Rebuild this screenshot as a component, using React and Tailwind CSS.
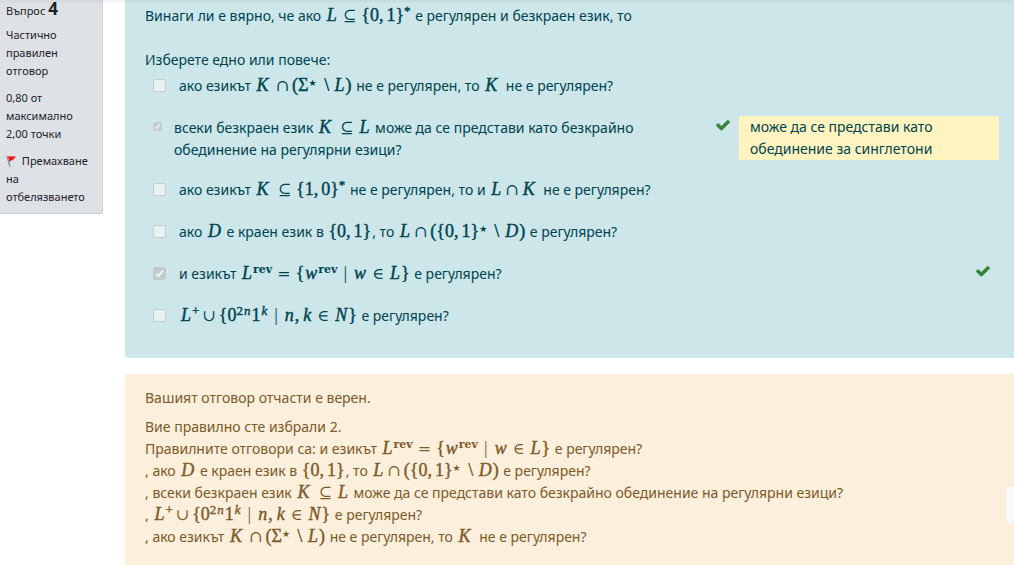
import React from 'react';

/* ---------- inline maths ---------- */

const M = ({ children }) => (
  <span className="mx-px whitespace-nowrap font-['Liberation_Serif','DejaVu_Serif',serif] text-[18px] leading-none [-webkit-text-stroke:0.4px]">
    {children}
  </span>
);
const V = ({ children }) => <i className="mx-px">{children}</i>;
const K = () => <i className="mr-1 ml-px">K</i>;
const Rel = ({ children }) => (
  <span className="mx-[5px] font-['DejaVu_Serif',serif] text-[16px] leading-none [-webkit-text-stroke:0]">{children}</span>
);
const Bin = ({ children }) => (
  <span className="mx-[3px] font-['DejaVu_Serif',serif] text-[16px] leading-none [-webkit-text-stroke:0]">{children}</span>
);
const Bar = () => <span className="mx-1.5 [-webkit-text-stroke:0]">|</span>;
const Comma = () => <span className="mr-[3px]">,</span>;
const Sup = ({ children }) => (
  <span className="relative -top-1.5 text-[13px] leading-none">{children}</span>
);
const Star = () => (
  <span className="relative -top-[5px] mr-px font-['DejaVu_Sans',sans-serif] text-[9px] leading-none [-webkit-text-stroke:0]">★</span>
);
const Rev = () => (
  <span className="relative -top-1.5 font-['DejaVu_Serif',serif] text-[11px] leading-none font-bold [-webkit-text-stroke:0]">rev</span>
);

const Bits = ({ a = 0, b = 1 }) => (
  <>
    {'{'}{a}<Comma />{b}{'}'}
  </>
);

const Complement = () => (
  <>
    ако езикът <M><K /><Bin>∩</Bin>(Σ<Star /><Bin>∖</Bin><V>L</V>)</M> не е регулярен, то <M><K /></M> не е регулярен?
  </>
);
const InfiniteUnion = () => (
  <>
    всеки безкраен език <M><K /><Rel>⊆</Rel><V>L</V></M> може да се представи като безкрайно обединение на регулярни езици?
  </>
);
const Intersection = () => (
  <>
    ако езикът <M><K /><Rel>⊆</Rel><Bits a={1} b={0} /><Sup>*</Sup></M> не е регулярен, то и <M><V>L</V><Bin>∩</Bin><K /></M> не е регулярен?
  </>
);
const FiniteLanguage = () => (
  <>
    ако <M><V>D</V></M> е краен език в <M><Bits /></M>, то <M><V>L</V><Bin>∩</Bin>(<Bits /><Star /><Bin>∖</Bin><V>D</V>)</M> е регулярен?
  </>
);
const Reverse = () => (
  <>
    и езикът <M><V>L</V><Rev /><Rel>=</Rel>{'{'}<V>w</V><Rev /><Bar /><V>w</V><Rel>∈</Rel><V>L</V>{'}'}</M> е регулярен?
  </>
);
const Powers = () => (
  <>
    <M><V>L</V><Sup>+</Sup><Bin>∪</Bin>{'{'}0<Sup>2<V>n</V></Sup>1<Sup><V>k</V></Sup><Bar /><V>n</V><Comma /><V>k</V><Rel>∈</Rel><V>N</V>{'}'}</M> е регулярен?
  </>
);

/* ---------- icons ---------- */

const Check = () => (
  <svg viewBox="0 0 1792 1792" className="mr-2 size-4 shrink-0 fill-[#398439]" role="img" aria-label="Правилно">
    <path d="M1671 566q0 40-28 68l-724 724-136 136q-28 28-68 28t-68-28l-136-136-362-362q-28-28-28-68t28-68l136-136q28-28 68-28t68 28l294 295 656-657q28-28 68-28t68 28l136 136q28 28 28 68z" />
  </svg>
);

const Flag = () => (
  <svg viewBox="0 0 12 12" className="mr-px inline-block size-3 align-[-2px]" aria-hidden="true">
    <path d="M1 1 4 11.5" stroke="#8b8b8b" strokeWidth="1.3" fill="none" />
    <path d="M2 1.2 10 1.4 7.4 4.4 3.4 6.4z" fill="#ee1515" />
  </svg>
);

/* ---------- answers ---------- */

const answers = [
  { id: 'a0', Body: Complement },
  { id: 'a1', Body: InfiniteUnion, checked: true, correct: true, small: true, feedback: 'може да се представи като обединение за синглетони' },
  { id: 'a2', Body: Intersection },
  { id: 'a3', Body: FiniteLanguage },
  { id: 'a4', Body: Reverse, checked: true, correct: true },
  { id: 'a5', Body: Powers },
];

function Answer({ id, Body, checked, correct, small, feedback }) {
  return (
    <div className={`flex items-start pl-2 ${feedback ? 'pb-[18px]' : 'pb-5'}`}>
      <span className={`relative flex shrink-0 ${small ? 'mr-3 mt-[5px] size-[9px]' : 'mr-[13px] mt-1 size-[13px]'}`}>
        <input
          id={id}
          type="checkbox"
          disabled
          defaultChecked={checked}
          className="size-full appearance-none rounded-[2px] border border-[#c6cdcf] bg-[#e8f0f2] checked:border-[#c5cbcc] checked:bg-[#c5cbcc]"
        />
        {checked && (
          <svg viewBox="0 0 13 13" className="pointer-events-none absolute inset-0 size-full" aria-hidden="true">
            <path d="M3 6.8 5.4 9.2 10 3.6" stroke="#f4f7f8" strokeWidth="1.8" fill="none" />
          </svg>
        )}
      </span>
      <label htmlFor={id} className="min-w-0 flex-1 pr-3"><Body /></label>
      {correct && <Check />}
      {feedback && <div className="-mt-px w-[260px] shrink-0 bg-[#fff3bf] px-[11px]">{feedback}</div>}
    </div>
  );
}

export default function App() {
  return (
    <div className="relative flex min-h-screen items-start overflow-hidden bg-white font-['Noto_Sans',sans-serif] text-[14px] leading-[22px]">
      <div className="absolute inset-x-0 top-0 h-1 bg-gradient-to-b from-black/5 to-transparent" />

      <aside className="w-[103px] shrink-0 rounded-br-[2px] border-r border-b border-[#cad0d7] bg-[#dee2e6] pr-2 pb-[7px] pl-1.5 text-[11px] leading-[18px] text-[#1d2125]">
        <h3 className="mb-1.5 leading-[18px]">Въпрос <span className="text-[17px] font-bold">4</span></h3>
        <div className="mb-[9px]">Частично правилен отговор</div>
        <div className="mb-[9px]">0,80 от максимално 2,00 точки</div>
        <a href="#flag" className="block"><Flag /> Премахване на отбелязването</a>
      </aside>

      <main className="ml-[22px] flex min-h-screen min-w-0 flex-1 flex-col">
        <section className="mb-4 rounded-bl bg-[#cce6ea] pt-[5px] pr-[15px] pb-[11px] pl-5 text-[#00434e]">
          <p className="mb-[22px]">
            Винаги ли е вярно, че ако <M><V>L</V><Rel>⊆</Rel><Bits /><Sup>*</Sup></M> е регулярен и безкраен език, то
          </p>
          <fieldset>
            <legend className="mb-1">Изберете едно или повече:</legend>
            {answers.map((a) => <Answer key={a.id} {...a} />)}
          </fieldset>
        </section>

        <section className="flex-1 rounded-tl bg-[#fcefdc] pt-[13px] pr-[15px] pl-5 text-[#7d5a29]">
          <p className="mb-[7px]">Вашият отговор отчасти е верен.</p>
          <p>Вие правилно сте избрали 2.</p>
          <div>Правилните отговори са: <Reverse /></div>
          <div>, <FiniteLanguage /></div>
          <div>, <InfiniteUnion /></div>
          <div>, <Powers /></div>
          <div>, <Complement /></div>
        </section>
      </main>

      <button type="button" aria-label="Отваряне на панела" className="absolute right-0 bottom-[42px] h-9 w-2 rounded-l bg-[#f8f9fa]" />
    </div>
  );
}
